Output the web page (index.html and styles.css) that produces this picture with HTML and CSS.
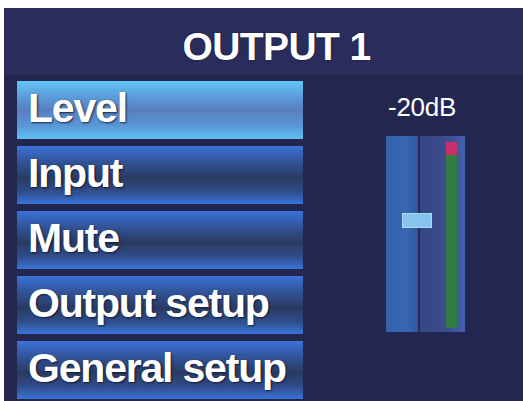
FILE: index.html
```html
<!DOCTYPE html>
<html lang="en">
<head>
  <meta charset="UTF-8">
  <title>OUTPUT 1</title>
  <link rel="stylesheet" href="styles.css">
</head>
<body>

<div class="panel">
  <div class="header">OUTPUT 1</div>
  <div class="content">
    <div class="menu">
      <div class="item active">Level</div>
      <div class="item">Input</div>
      <div class="item">Mute</div>
      <div class="item">Output setup</div>
      <div class="item">General setup</div>
    </div>
    <div class="side">
      <div class="db">-20dB</div>
      <div class="fader">
        <div class="track-left"></div>
        <div class="track-line"></div>
        <div class="track-right">
          <div class="meter">
            <div class="peak"></div>
            <div class="level"></div>
          </div>
        </div>
        <div class="knob"></div>
      </div>
    </div>
  </div>
</div>

</body>
</html>
```

FILE: styles.css
```css
body {
  margin: 0;
  background: #fff;
  font-family: "Liberation Sans", Arial, sans-serif;
  overflow: hidden;
}
.panel {
  margin: 8px 0 0 4px;
  height: 393px;
  background: #262a55;
}
.header {
  height: 57px;
  padding-top: 10px;
  padding-left: 26px;
  background: #2a2c5b;
  color: #fff;
  font-size: 39px;
  font-weight: bold;
  line-height: 57px;
  text-align: center;
  letter-spacing: -0.6px;
  text-shadow: 0 0 2px rgba(0,0,0,0.5);
}
.content {
  display: flex;
  padding-top: 6px;
  background: #232750;
  height: 320px;
}
.menu {
  display: flex;
  flex-direction: column;
  gap: 7px;
  margin-left: 13px;
  width: 286px;
}
.item {
  height: 58px;
  line-height: 54px;
  padding-left: 11px;
  color: #fff;
  font-size: 41px;
  font-weight: bold;
  letter-spacing: -1.2px;
  text-shadow: 1px 1px 2px rgba(10,15,40,0.8);
  background: linear-gradient(to bottom, #3d72da 0%, #32569e 25%, #2a3a60 55%, #304f8e 80%, #3a74da 100%);
}
.item.active {
  background: linear-gradient(to bottom, #63c6f6 0%, #5c9fdc 25%, #5a7ec0 50%, #5a98d8 78%, #62c2f4 100%);
}
.side {
  display: flex;
  flex-direction: column;
  align-items: center;
  margin-left: 83px;
  width: 79px;
}
.db {
  margin-top: 13px;
  padding-right: 7px;
  color: #fff;
  font-size: 26px;
  line-height: 26px;
  letter-spacing: -0.3px;
}
.fader {
  position: relative;
  display: flex;
  margin-top: 16px;
  width: 79px;
  height: 196px;
}
.track-left {
  width: 32px;
  background: linear-gradient(to right, #3560aa, #3866b2 60%, #3158a0);
}
.track-line {
  width: 2px;
  background: #252c55;
}
.track-right {
  flex: 1;
  display: flex;
  background: linear-gradient(to right, #364783, #3a4c8c 55%, #4660b0);
}
.meter {
  display: flex;
  flex-direction: column;
  width: 11px;
  margin: 6px 0 4px 26px;
}
.peak {
  height: 13px;
  background: #c8306a;
}
.level {
  flex: 1;
  background: #2f7d3c;
}
.knob {
  position: absolute;
  left: 16px;
  top: 77px;
  width: 30px;
  height: 15px;
  background: #86c4ee;
  border: 1px solid #a9d8f8;
  box-sizing: border-box;
}
```
